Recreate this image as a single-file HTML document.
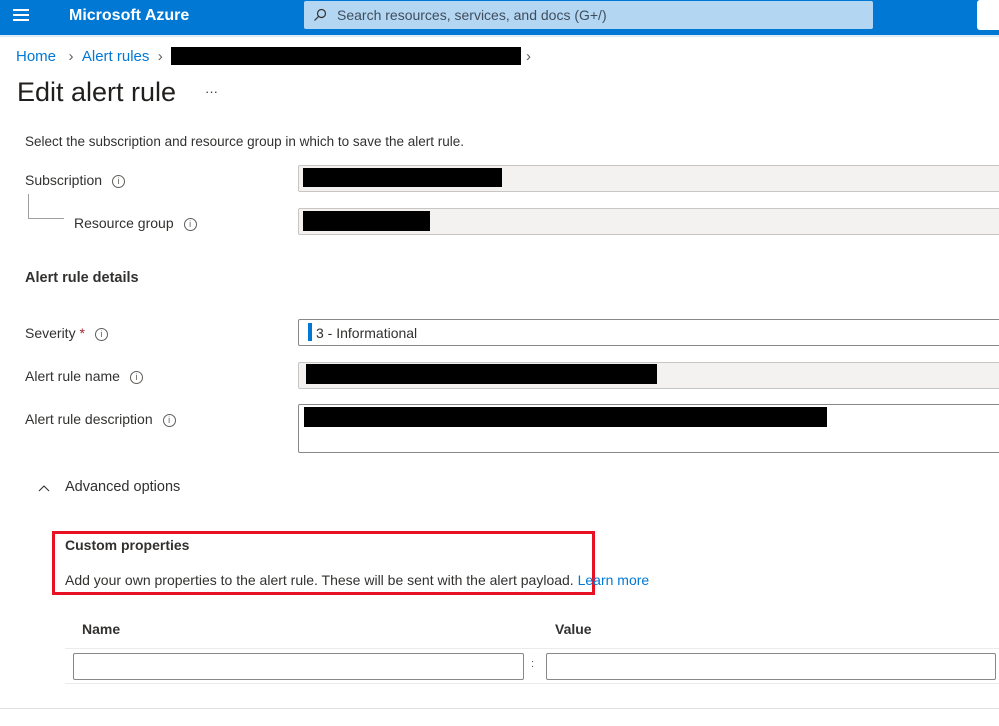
<!DOCTYPE html>
<html><head><meta charset="utf-8"><style>
*{box-sizing:border-box;margin:0;padding:0}
body{width:999px;height:726px;overflow:hidden;background:#fff;font-family:"Liberation Sans",sans-serif;color:#323130;position:relative;font-size:14px}
.a{position:absolute;white-space:nowrap}
.box{position:absolute;border:1px solid #8a8886;border-radius:2px}
.g{background:#f3f2f1;border-color:#c8c6c4}
.k{position:absolute;background:#000}
.i{display:inline-block;width:13px;height:13px;border:1px solid #605e5c;border-radius:50%;font-size:9px;line-height:11px;text-align:center;color:#605e5c;vertical-align:middle;margin-left:10px}
</style></head><body>
<div class="a" style="left:0;top:0;width:999px;height:35px;background:#0078d4"></div>
<div class="a" style="left:0;top:35px;width:999px;height:2px;background:#deecf9"></div>
<div class="a" style="left:13px;top:9px;width:16px;height:2px;background:#fff;box-shadow:0 5px 0 #fff,0 10px 0 #fff"></div>
<div class="a" style="left:69px;top:7px;color:#fff;font-size:16px;font-weight:bold">Microsoft Azure</div>
<div class="a" style="left:304px;top:1px;width:569px;height:28px;background:#b3d6f2;border-radius:2px"></div>
<svg class="a" style="left:313px;top:8px" width="14" height="14"><circle cx="8.5" cy="5.5" r="4" fill="none" stroke="#323130" stroke-width="1.2"/><path d="M5.5 8.5L1.5 12.5" stroke="#323130" stroke-width="1.2"/></svg>
<div class="a" style="left:337px;top:7px;color:#404e5c;font-size:14px">Search resources, services, and docs (G+/)</div>
<div class="a" style="left:977px;top:0;width:22px;height:30px;background:#fff;border-radius:3px 0 0 3px"></div>
<div class="a" style="left:16px;top:48px;color:#0078d4;font-size:15px">Home <span style="color:#605e5c">&nbsp;&nbsp;›&nbsp;&nbsp;</span>Alert rules <span style="color:#605e5c">&nbsp;›</span></div>
<div class="k" style="left:171px;top:47px;width:350px;height:18px"></div>
<div class="a" style="left:526px;top:48px;color:#605e5c;font-size:15px">›</div>
<div class="a" style="left:17px;top:77px;font-size:27px;color:#201f1e">Edit alert rule</div>
<div class="a" style="left:205px;top:84px;font-size:13px">···</div>
<div class="a" style="left:25px;top:134px;font-size:13.5px">Select the subscription and resource group in which to save the alert rule.</div>
<div class="a" style="left:25px;top:172px">Subscription<span class="i">i</span></div>
<div class="a" style="left:28px;top:194px;width:36px;height:25px;border-left:1px solid #a19f9d;border-bottom:1px solid #a19f9d"></div>
<div class="a" style="left:74px;top:215px">Resource group<span class="i">i</span></div>
<div class="box g" style="left:298px;top:165px;width:710px;height:27px"></div>
<div class="k" style="left:303px;top:168px;width:199px;height:19px"></div>
<div class="box g" style="left:298px;top:208px;width:710px;height:27px"></div>
<div class="k" style="left:303px;top:211px;width:127px;height:20px"></div>
<div class="a" style="left:25px;top:270px;font-weight:bold;font-size:14.5px">Alert rule details</div>
<div class="a" style="left:25px;top:325px">Severity <span style="color:#a4262c">*</span><span class="i">i</span></div>
<div class="box" style="left:298px;top:319px;width:710px;height:27px"></div>
<div class="a" style="left:308px;top:323px;width:4px;height:18px;background:#0078d4"></div>
<div class="a" style="left:316px;top:325px">3 - Informational</div>
<div class="a" style="left:25px;top:368px">Alert rule name<span class="i">i</span></div>
<div class="box g" style="left:298px;top:362px;width:710px;height:27px"></div>
<div class="k" style="left:306px;top:364px;width:351px;height:20px"></div>
<div class="a" style="left:25px;top:411px">Alert rule description<span class="i">i</span></div>
<div class="box" style="left:298px;top:404px;width:710px;height:49px"></div>
<div class="k" style="left:304px;top:407px;width:523px;height:20px"></div>
<svg class="a" style="left:37px;top:481px" width="14" height="14"><path d="M2 10L7 5L12 10" fill="none" stroke="#323130" stroke-width="1.1"/></svg>
<div class="a" style="left:65px;top:479px;font-size:14.5px">Advanced options</div>
<div class="a" style="left:52px;top:531px;width:543px;height:64px;border:3px solid #e81123"></div>
<div class="a" style="left:65px;top:537px;font-weight:bold">Custom properties</div>
<div class="a" style="left:65px;top:572px">Add your own properties to the alert rule. These will be sent with the alert payload. <span style="color:#0078d4">Learn more</span></div>
<div class="a" style="left:82px;top:621px;font-weight:bold">Name</div>
<div class="a" style="left:555px;top:621px;font-weight:bold">Value</div>
<div class="a" style="left:65px;top:648px;width:934px;height:1px;background:#edebe9"></div>
<div class="box" style="left:73px;top:653px;width:451px;height:27px"></div>
<div class="a" style="left:531px;top:658px;font-size:11px;color:#605e5c">:</div>
<div class="box" style="left:546px;top:653px;width:450px;height:27px"></div>
<div class="a" style="left:65px;top:683px;width:934px;height:1px;background:#edebe9"></div>
<div class="a" style="left:0;top:708px;width:999px;height:1px;background:#e1dfdd"></div>
</body></html>
